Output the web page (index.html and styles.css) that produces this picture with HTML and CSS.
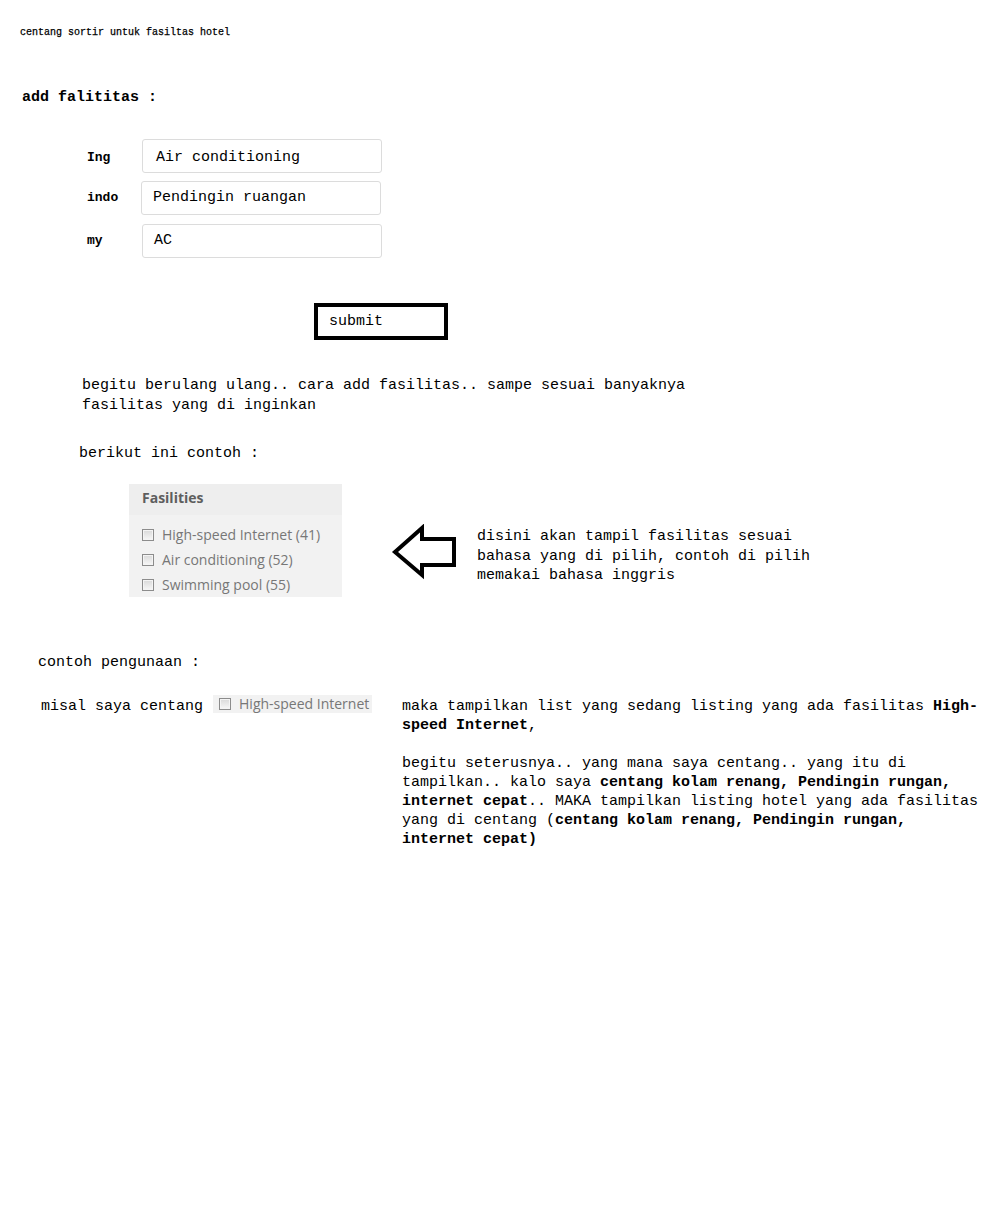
FILE: index.html
```html
<!DOCTYPE html>
<html>
<head>
<meta charset="utf-8">
<title>centang sortir untuk fasiltas hotel</title>
<link rel="stylesheet" href="styles.css">
</head>
<body>
<div class="page">
  <div class="title">centang sortir untuk fasiltas hotel</div>
  <div class="heading">add falititas :</div>

  <div class="form">
    <div class="row"><span class="lbl">Ing</span><div class="field f1">Air conditioning</div></div>
    <div class="row"><span class="lbl">indo</span><div class="field f2">Pendingin ruangan</div></div>
    <div class="row r3"><span class="lbl">my</span><div class="field">AC</div></div>
  </div>

  <div class="submit-wrap"><div class="submit">submit</div></div>

  <p class="para">begitu berulang ulang.. cara add fasilitas.. sampe sesuai banyaknya fasilitas yang di inginkan</p>

  <p class="example">berikut ini contoh :</p>

  <div class="demo">
    <div class="fbox">
      <div class="fhead">Fasilities</div>
      <ul class="flist">
        <li><span class="cb"></span>High-speed Internet (41)</li>
        <li><span class="cb"></span>Air conditioning (52)</li>
        <li><span class="cb"></span>Swimming pool (55)</li>
      </ul>
    </div>
    <svg class="arrow" width="66" height="56" viewBox="0 0 66 56">
      <polygon points="4,28 31,4 31,15 63,15 63,41 31,41 31,51" fill="none" stroke="#000" stroke-width="4" stroke-linejoin="miter"/>
    </svg>
    <p class="note">disini akan tampil fasilitas sesuai bahasa yang di pilih, contoh di pilih memakai bahasa inggris</p>
  </div>

  <p class="usage">contoh pengunaan :</p>

  <div class="case">
    <div class="case-left">
      <span class="nowrap">misal saya centang</span>
      <span class="chip"><span class="cb"></span>High-speed Internet</span>
    </div>
    <div class="case-right">maka tampilkan list yang sedang listing yang ada fasilitas <b>High-speed Internet</b>,<br><br>begitu seterusnya.. yang mana saya centang.. yang itu di tampilkan.. kalo saya <b>centang kolam renang, Pendingin rungan, internet cepat</b>.. MAKA tampilkan listing hotel yang ada fasilitas yang di centang (<b>centang kolam renang, Pendingin rungan, internet cepat)</b></div>
  </div>
</div>
</body>
</html>
```

FILE: styles.css
```css
html, body {
  margin: 0;
  padding: 0;
  background: #fff;
}

.page {
  font-family: "Liberation Mono", "DejaVu Sans Mono", monospace;
  font-size: 15px;
  line-height: 20px;
  color: #000;
  padding-top: 27px;
  padding-bottom: 40px;
}

p {
  margin: 0;
}

.title {
  font-size: 10px;
  line-height: 12px;
  padding-left: 20px;
  -webkit-text-stroke: 0.25px #000;
}

.heading {
  margin-top: 49px;
  padding-left: 22px;
  font-weight: bold;
}

.form {
  margin-top: 31px;
  padding-left: 87px;
  display: flex;
  flex-direction: column;
  gap: 8px;
}

.row {
  display: flex;
  align-items: baseline;
}

.r3 {
  margin-top: 1px;
}

.lbl {
  width: 55px;
  font-size: 13px;
  font-weight: bold;
}

.field {
  width: 240px;
  height: 34px;
  box-sizing: border-box;
  border: 1px solid #dcdcdc;
  border-radius: 3px;
  padding: 6px 11px 0;
}

.f1 {
  padding: 8px 13px 0;
}

.f2 {
  margin-left: -1px;
}

.submit-wrap {
  margin-top: 45px;
  padding-left: 314px;
}

.submit {
  width: 134px;
  height: 37px;
  box-sizing: border-box;
  border: 4px solid #000;
  padding: 5px 0 0 11px;
}

.para {
  margin-top: 36px;
  padding-left: 82px;
  width: 630px;
}

.example {
  margin-top: 28px;
  padding-left: 79px;
}

.demo {
  margin-top: 20px;
  padding-left: 129px;
  display: flex;
  align-items: flex-start;
}

.fbox {
  width: 213px;
  background: #f2f2f2;
  font-family: "Open Sans", "Liberation Sans", sans-serif;
  font-size: 14px;
}

.fhead {
  background: #eeeeee;
  height: 31px;
  box-sizing: border-box;
  padding: 4px 13px 0;
  font-weight: bold;
  color: #5e5e5e;
  line-height: 20px;
}

.flist {
  list-style: none;
  margin: 0;
  padding: 7px 0 0 13px;
  color: #777;
}

.flist li {
  line-height: 25px;
  height: 25px;
  display: flex;
  align-items: center;
}

.cb {
  display: inline-block;
  width: 12px;
  height: 12px;
  box-sizing: border-box;
  border: 1px solid #8c8c8c;
  background: linear-gradient(#d9d9d9, #f7f7f7);
  box-shadow: inset 0 0 0 1px #f4f4f4;
  margin-right: 8px;
  flex: none;
}

.arrow {
  margin-left: 49px;
  margin-top: 40px;
  flex: none;
}

.note {
  margin-left: 20px;
  margin-top: 43px;
  width: 340px;
  line-height: 19.5px;
}

.usage {
  margin-top: 56px;
  padding-left: 38px;
}

.case {
  margin-top: 22px;
  padding-left: 41px;
  display: flex;
  align-items: baseline;
}

.case-left {
  display: flex;
  align-items: baseline;
  width: 361px;
  flex: none;
}

.nowrap {
  white-space: nowrap;
}

.chip {
  margin-left: 10px;
  background: #f2f2f2;
  font-family: "Open Sans", "Liberation Sans", sans-serif;
  font-size: 14px;
  line-height: 18px;
  color: #777;
  padding: 0 3px 0 6px;
  display: inline-flex;
  align-items: center;
  white-space: nowrap;
  flex: none;
}

.chip .cb {
  margin-right: 8px;
}

.case-right {
  width: 580px;
  line-height: 19px;
}
```
